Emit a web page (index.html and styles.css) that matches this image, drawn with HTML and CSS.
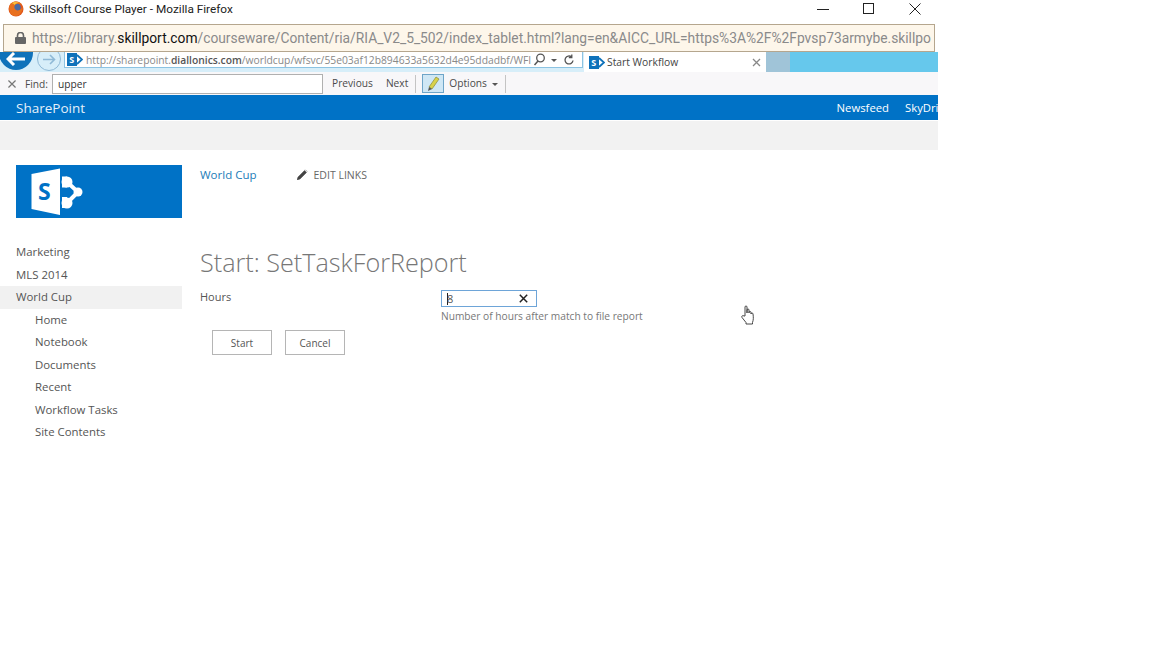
FILE: index.html
```html
<!DOCTYPE html>
<html lang="en">
<head>
  <meta charset="UTF-8">
  <title>Skillsoft Course Player - Mozilla Firefox</title>
  <link rel="stylesheet" href="styles.css">
</head>
<body>
<div class="window">

  <div class="title-bar">
    <svg class="ff-icon" width="16" height="16" viewBox="0 0 16 16">
      <circle cx="8" cy="8" r="7.5" fill="#e0561c"/>
      <circle cx="9" cy="6.500" r="3.800" fill="#4a6aa5"/>
      <path d="M1.5 5C2 2 5 .5 8 .5c3 0 5 1.500 6 3.500-2-1.500-4-1.500-5.500-1C7 3.500 6 5 6.500 7c.5 2 3 3 5 2 1-.5 2-1.500 3-3 .5 4-2.500 9-7 9C3 15 .5 10 1.500 5z" fill="#e8701f"/>
      <path d="M4 2c2-1.200 5-1.200 7 0-2 0-3.500.5-4.500 2C6 3 5 2.500 4 2z" fill="#f8c23c"/>
    </svg>
    <span class="title-text">Skillsoft Course Player - Mozilla Firefox</span>
    <div class="win-controls">
      <svg width="12" height="12" viewBox="0 0 12 12"><path d="M0 6.500h12" stroke="#222" fill="none"/></svg>
      <svg width="12" height="12" viewBox="0 0 12 12"><rect x=".5" y=".5" width="10" height="10" stroke="#222" fill="none"/></svg>
      <svg width="12" height="12" viewBox="0 0 12 12"><path d="M.5.500l11 11M11.500.500l-11 11" stroke="#222" fill="none"/></svg>
    </div>
  </div>

  <div class="url-bar">
    <svg class="lock" width="11" height="12" viewBox="0 0 11 12">
      <path d="M2.500 5V3.500a3 3 0 0 1 6 0V5" stroke="#666" stroke-width="1.600" fill="none"/>
      <rect y="5" width="11" height="7" rx="1" fill="#666"/>
    </svg>
    <span class="url-text">https://library.<b>skillport.com</b>/courseware/Content/ria/RIA_V2_5_502/index_tablet.html?lang=en&amp;AICC_URL=https%3A%2F%2Fpvsp73armybe.skillpo</span>
  </div>

  <div class="ie-strip">
    <div class="back-btn">
      <svg width="20" height="14" viewBox="0 0 20 14"><path d="M8 1L2 7l6 6M2.500 7H19" stroke="#fff" stroke-width="3" fill="none"/></svg>
    </div>
    <div class="fwd-btn">
      <svg width="14" height="11" viewBox="0 0 14 11"><path d="M8 1l4.500 4.500L8 10M12 5.500H1" stroke="#8fb9d6" stroke-width="1.600" fill="none"/></svg>
    </div>
    <div class="address">
      <svg class="sp-mini" width="16" height="13" viewBox="0 0 16 13">
        <rect width="10" height="13" fill="#0f72ba"/>
        <path d="M10 2l5 4.500L10 11" stroke="#0f72ba" stroke-width="1.800" fill="none"/>
        <text x="2.200" y="10" class="sp-mini-s">S</text>
      </svg>
      <span class="address-text">http://sharepoint.<b>diallonics.com</b>/worldcup/wfsvc/55e03af12b894633a5632d4e95ddadbf/WFI</span>
      <svg class="addr-icon" width="13" height="13" viewBox="0 0 13 13"><circle cx="7.500" cy="5" r="3.800" stroke="#555" stroke-width="1.300" fill="none"/><path d="M5 8l-3.500 4" stroke="#555" stroke-width="1.500"/></svg>
      <span class="caret-small"></span>
      <svg class="addr-icon" width="12" height="12" viewBox="0 0 12 12"><path d="M10 6.500A4 4 0 1 1 8.500 2.800M8.800 .5v3h-3" stroke="#555" stroke-width="1.300" fill="none"/></svg>
    </div>
    <div class="tab">
      <svg class="sp-mini" width="16" height="13" viewBox="0 0 16 13">
        <rect width="10" height="13" fill="#0f72ba"/>
        <path d="M10 2l5 4.500L10 11" stroke="#0f72ba" stroke-width="1.800" fill="none"/>
        <text x="2.200" y="10" class="sp-mini-s">S</text>
      </svg>
      <span class="tab-text">Start Workflow</span>
      <svg width="9" height="9" viewBox="0 0 9 9"><path d="M1 1l7 7M8 1L1 8" stroke="#888" stroke-width="1.300"/></svg>
    </div>
    <div class="new-tab"></div>
  </div>

  <div class="find-bar">
    <svg class="find-close" width="8" height="8" viewBox="0 0 9 9"><path d="M.5.500l8 8M8.500.500l-8 8" stroke="#777" stroke-width="1.400"/></svg>
    <label class="find-label">Find:</label>
    <div class="find-input">upper</div>
    <span class="find-link prev">Previous</span>
    <span class="find-link next">Next</span>
    <span class="find-sep"></span>
    <div class="highlight-btn">
      <svg width="15" height="17" viewBox="0 0 15 17">
        <path d="M3 12L10 2l3 2-7 10z" fill="#d8d24a" stroke="#8a8a3a" stroke-width=".7"/>
        <path d="M3 12l3 2-4 2z" fill="#555"/>
      </svg>
    </div>
    <span class="find-link options">Options</span>
    <span class="caret-small options-caret"></span>
    <span class="find-sep"></span>
  </div>

  <div class="suite-bar">
    <span class="suite-brand">SharePoint</span>
    <span class="suite-link newsfeed">Newsfeed</span>
    <span class="suite-link skydrive">SkyDrive</span>
  </div>
  <div class="ribbon"></div>

  <div class="page">
    <div class="sidebar">
      <div class="site-logo">
        <svg width="54" height="47" viewBox="0 0 54 47">
          <path d="M1.500 6L30 .5V47L1.500 41z" fill="#fff"/>
          <text x="8" y="32" class="logo-s">S</text>
          <path d="M37 14L48 24 37 35" stroke="#fff" stroke-width="4" fill="none"/>
          <path d="M32 8.500h5v11h-5zM32 29h5v11h-5z" fill="#fff"/>
          <circle cx="37" cy="14" r="5.500" fill="#fff"/>
          <circle cx="48" cy="24" r="4.500" fill="#fff"/>
          <circle cx="37" cy="35" r="5.500" fill="#fff"/>
        </svg>
      </div>
      <ul class="nav">
        <li>Marketing</li>
        <li>MLS 2014</li>
        <li class="selected">World Cup</li>
        <li class="sub">Home</li>
        <li class="sub">Notebook</li>
        <li class="sub">Documents</li>
        <li class="sub">Recent</li>
        <li class="sub">Workflow Tasks</li>
        <li class="sub">Site Contents</li>
      </ul>
    </div>

    <div class="content">
      <div class="top-nav">
        <a class="top-link">World Cup</a>
        <svg class="pencil" width="11" height="11" viewBox="0 0 11 11"><path d="M0 11l1-3L7.500 1.500 9.500 3.500 3 10zM8.300 .7l2 2" stroke="#444" stroke-width=".5" fill="#444"/></svg>
        <span class="edit-links">EDIT LINKS</span>
      </div>
      <h1 class="page-title">Start: SetTaskForReport</h1>
      <div class="form-row">
        <div class="form-label">Hours</div>
        <div class="form-field">
          <div class="text-box">
            <span class="text-caret"></span><span class="text-value">8</span>
            <svg width="9" height="9" viewBox="0 0 9 9"><path d="M.8.800l7.400 7.400M8.200.800L.8 8.200" stroke="#222" stroke-width="1.500"/></svg>
          </div>
          <div class="hint">Number of hours after match to file report</div>
        </div>
      </div>
      <div class="buttons">
        <button class="btn">Start</button>
        <button class="btn">Cancel</button>
      </div>
    </div>
  </div>

  <svg class="hand-cursor" width="14" height="20" viewBox="0 0 14 20">
    <path d="M4 11V2a1 1 0 0 1 2 0v6V5a1 1 0 0 1 2 0v3-.5a1 1 0 0 1 2 0V9a1 1 0 0 1 2 0c.5 3 .5 6-.5 8.500V19H5v-1.500L1 12.500c-.8-1.500.8-2.500 2-1.500z" fill="#fff" stroke="#333" stroke-width=".9"/>
  </svg>
</div>
</body>
</html>
```

FILE: styles.css
```css
html, body {
  margin: 0;
  background: #fff;
}
body {
  font-family: "Open Sans", "Noto Sans", Arial, sans-serif;
  color: #555;
  height: 648px;
  overflow: hidden;
}
.window {
  position: relative;
  width: 938px;
  overflow: hidden;
}

/* firefox title + url */
.title-bar {
  display: flex;
  align-items: center;
  height: 24px;
  padding: 0 0 7px 8px;
  box-sizing: border-box;
  color: #222;
  font-family: Roboto, Arial, sans-serif;
  font-size: 11.800px;
}
.ff-icon {
  margin-right: 5px;
}
.win-controls {
  display: flex;
  gap: 34px;
  margin-left: auto;
  margin-right: 17px;
}
.url-bar {
  display: flex;
  align-items: center;
  gap: 6px;
  height: 28px;
  margin: 0 3px;
  padding-left: 11px;
  box-sizing: border-box;
  background: #fdf6ea;
  border: 1px solid #b5a68e;
  color: #8a8a8a;
  font-family: Roboto, Arial, sans-serif;
  font-size: 13.800px;
  white-space: nowrap;
  overflow: hidden;
}
.lock {
  flex: none;
}
.url-text b {
  font-weight: normal;
  color: #111;
}

/* ie screenshot chrome */
.ie-strip {
  display: flex;
  height: 20px;
  background: #d7eef9;
  overflow: hidden;
}
.back-btn {
  flex: none;
  display: flex;
  align-items: center;
  justify-content: center;
  width: 34px;
  height: 34px;
  margin: -16px 4px 0 -1px;
  border-radius: 50%;
  background: #0f72ba;
}
.back-btn svg {
  margin-top: 12px;
}
.fwd-btn {
  flex: none;
  display: flex;
  align-items: center;
  justify-content: center;
  width: 24px;
  height: 24px;
  margin: -5px 3px 0 0;
  border: 1px solid #8fb9d6;
  box-sizing: border-box;
  border-radius: 50%;
}
.address {
  flex: none;
  display: flex;
  align-items: center;
  width: 519px;
  height: 16px;
  padding: 0 7px 0 2px;
  box-sizing: border-box;
  background: #fff;
  border: 1px solid #8cc3e2;
  border-top: none;
  font-size: 10.300px;
  color: #888;
  white-space: nowrap;
}
.address-text {
  flex: 1;
  min-width: 0;
  margin-left: 3px;
  overflow: hidden;
}
.address-text b {
  font-weight: 600;
  color: #555;
}
.sp-mini, .addr-icon {
  flex: none;
}
.sp-mini-s {
  font-size: 9px;
  font-weight: 700;
  fill: #fff;
}
.caret-small {
  flex: none;
  width: 0;
  height: 0;
  margin: 1px 6px 0 5px;
  border-left: 3.500px solid transparent;
  border-right: 3.500px solid transparent;
  border-top: 3.500px solid #555;
}
.tab {
  flex: none;
  display: flex;
  align-items: center;
  width: 182px;
  margin-left: 1px;
  padding: 0 5px;
  box-sizing: border-box;
  background: #fff;
  color: #444;
  font-size: 10.300px;
}
.tab-text {
  flex: 1;
  margin-left: 2px;
}
.new-tab {
  flex: none;
  width: 24px;
  background: #a0c4d8;
}
.ie-strip::after {
  content: "";
  flex: 1;
  background: #66c8ec;
}

/* find toolbar */
.find-bar {
  display: flex;
  align-items: center;
  height: 23px;
  padding-left: 8px;
  background: #f8f7f9;
  font-size: 10.200px;
  color: #4a4a4a;
}
.find-label {
  margin-left: 9px;
}
.find-input {
  width: 264px;
  height: 18px;
  margin-left: 4px;
  padding-left: 5px;
  background: #fff;
  border: 1px solid #b0b0b0;
  line-height: 19px;
  color: #333;
}
.find-link {
  padding-bottom: 2px;
}
.prev {
  margin-left: 9px;
}
.next {
  margin-left: 13px;
}
.find-sep {
  width: 1px;
  height: 18px;
  margin-left: 7px;
  background: #c4c4c4;
}
.highlight-btn {
  display: flex;
  align-items: center;
  justify-content: center;
  width: 20px;
  height: 17px;
  margin-left: 6px;
  background: #cfe7f5;
  border: 1px solid #6ea5c8;
}
.options {
  margin-left: 5px;
}
.options-caret {
  margin-right: 0;
}

/* sharepoint */
.suite-bar {
  display: flex;
  align-items: center;
  height: 25px;
  padding-left: 16px;
  background: #0072c6;
  color: #fff;
  white-space: nowrap;
}
.suite-brand {
  font-size: 13.500px;
  color: #e4f0fa;
}
.suite-link {
  font-size: 11.300px;
}
.newsfeed {
  margin-left: auto;
}
.skydrive {
  flex: none;
  width: 33px;
  margin-left: 16px;
  overflow: hidden;
}
.ribbon {
  height: 29px;
  margin-top: 1px;
  background: #f2f2f2;
}
.page {
  display: flex;
}
.sidebar {
  flex: none;
  width: 182px;
  padding-top: 15px;
}
.site-logo {
  display: flex;
  align-items: center;
  height: 53px;
  margin-left: 16px;
  padding-left: 14px;
  box-sizing: border-box;
  background: #0072c6;
}
.logo-s {
  font-size: 23px;
  font-weight: 700;
  fill: #0072c6;
}
.nav {
  margin: 23px 0 0;
  padding: 0;
  list-style: none;
  font-size: 11.400px;
}
.nav li {
  height: 22.500px;
  padding-left: 16px;
  line-height: 22px;
}
.nav .selected {
  background: #f1f1f1;
}
.nav .sub {
  padding-left: 35px;
}
.content {
  flex: 1;
  padding: 15px 0 0 18px;
}
.top-nav {
  display: flex;
  align-items: center;
  height: 18px;
}
.top-link {
  color: #1b7cb8;
  font-size: 11.500px;
}
.pencil {
  margin-left: 40px;
}
.edit-links {
  margin-left: 6px;
  padding-top: 1px;
  font-size: 10.500px;
  color: #666;
}
.page-title {
  margin: 62px 0 0;
  font-size: 25.200px;
  font-weight: 300;
  line-height: 34px;
  color: #777;
}
.form-row {
  display: flex;
  margin-top: 11px;
  font-size: 11px;
}
.form-label {
  width: 241px;
  margin-top: -1px;
}
.text-box {
  display: flex;
  align-items: center;
  width: 96px;
  height: 17px;
  padding: 0 8px 0 5px;
  box-sizing: border-box;
  border: 1px solid #6ea5d8;
  color: #555;
}
.text-box svg {
  margin-left: auto;
}
.text-caret {
  width: 1px;
  height: 12px;
  background: #222;
}
.text-value {
  margin-left: -1px;
}
.hint {
  margin-top: 2px;
  font-size: 10.200px;
  color: #777;
}
.buttons {
  display: flex;
  gap: 13px;
  margin: 7px 0 0 12px;
}
.btn {
  width: 60px;
  height: 25px;
  padding: 0;
  background: #fff;
  border: 1px solid #b5b5b5;
  font-family: inherit;
  font-size: 10px;
  color: #555;
}
.hand-cursor {
  position: absolute;
  left: 741px;
  top: 305px;
}
```
